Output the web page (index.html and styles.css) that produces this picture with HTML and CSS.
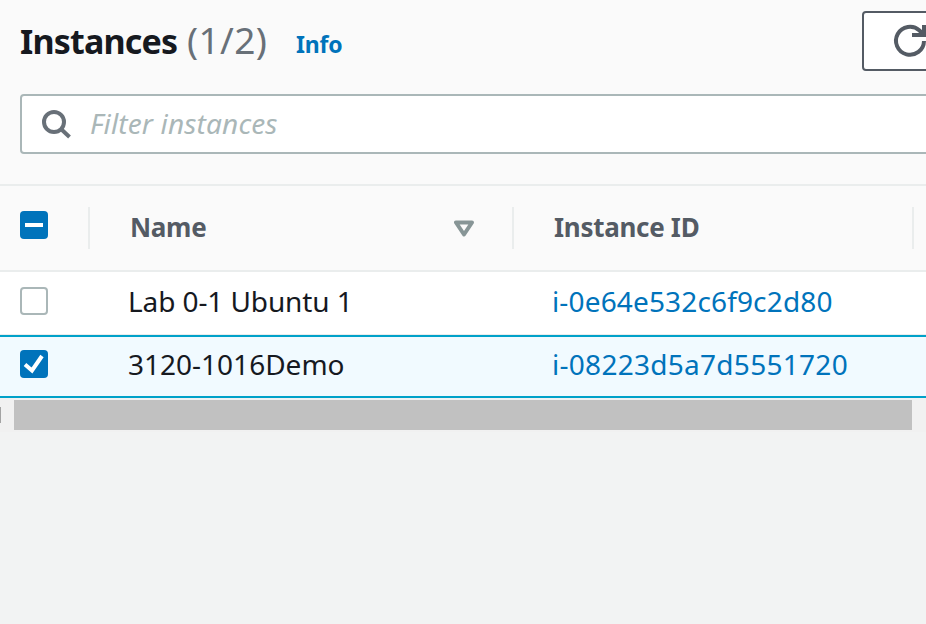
FILE: index.html
```html
<!DOCTYPE html>
<html lang="en">
<head>
<meta charset="utf-8">
<title>Instances</title>
<link rel="stylesheet" href="styles.css">
</head>
<body>
<main class="panel">
  <header class="head">
    <div class="title-row">
      <h1><span class="title">Instances</span><span class="count">(1/2)</span></h1>
      <a class="info">Info</a>
      <button class="refresh" aria-label="Refresh"><svg width="36" height="36" viewBox="0 0 36 36" fill="none" stroke="#545b64" stroke-width="4"><path d="M32 18A14 14 0 1 1 27.500 7.500L31 11"/><path d="M32 2V12H20"/></svg></button>
    </div>
    <div class="search">
      <svg width="32" height="32" viewBox="0 0 32 32" fill="none" stroke="#687078" stroke-width="4"><circle cx="14" cy="14" r="10"/><path d="M21 21L29.500 29"/></svg>
      <span class="placeholder">Filter instances</span>
    </div>
  </header>
  <div class="row columns">
    <div class="check"><span class="box on"><svg width="28" height="28" viewBox="0 0 28 28"><path d="M5 14H23" stroke="#fff" stroke-width="4"/></svg></span></div>
    <div class="name"><span class="label">Name</span><svg class="sort" width="20" height="17" viewBox="0 0 20 17"><path d="M2 2.500H18L10 14.500Z" fill="none" stroke="#879596" stroke-width="4" stroke-linejoin="round"/></svg></div>
    <div class="id"><span class="label">Instance ID</span></div>
  </div>
  <div class="row item first">
    <div class="check"><span class="box"></span></div>
    <div class="name"><span class="lab">Lab 0-1 Ubuntu 1</span></div>
    <div class="id"><a>i-0e64e532c6f9c2d80</a></div>
  </div>
  <div class="row item selected">
    <div class="check"><span class="box on"><svg width="28" height="28" viewBox="0 0 28 28"><path d="M5 14.500L12 20.500L22 6" fill="none" stroke="#fff" stroke-width="4"/></svg></span></div>
    <div class="name"><span>3120-1016Demo</span></div>
    <div class="id"><a class="wide">i-08223d5a7d5551720</a></div>
  </div>
  <div class="scroll"><span class="cap"></span><span class="thumb"></span></div>
</main>
</body>
</html>
```
FILE: styles.css
```css
*{box-sizing:border-box}
body{margin:0;background:#f2f3f3;font-family:"Noto Sans","Open Sans",sans-serif;color:#16191f;overflow:hidden}
.panel{width:926px;height:624px;overflow:hidden}
.head{height:186px;background:#fafafa;border-bottom:2px solid #eaeded;padding:11px 0 0 20px}
.title-row{display:flex;height:60px}
h1{display:flex;margin:0;font-size:34px;line-height:60px;white-space:nowrap;width:276px}
.title{width:167px;letter-spacing:-.8px}
.count{font-size:37px;line-height:58px;font-weight:400;color:#687078;letter-spacing:.4px}
.info{font-size:23px;font-weight:700;line-height:66px;color:#0073bb;letter-spacing:-.2px}
.refresh{margin-left:auto;flex:none;width:80px;height:60px;margin-right:-16px;border:2px solid #545b64;border-radius:4px;background:#fff;padding:0 0 0 28px;text-align:left}
.refresh svg{display:block}
.search{display:flex;align-items:center;margin-top:23px;width:930px;height:60px;border:2px solid #aab7b8;border-radius:4px;background:#fff;padding-left:18px}
.placeholder{font-size:28px;line-height:36px;font-style:italic;color:#aab7b8;margin:0 0 2px 18px;white-space:nowrap;letter-spacing:.15px}
.row{display:grid;grid-template-columns:90px 424px 400px;align-items:center}
.row>div{display:flex;align-items:center;height:42px}
.check{padding-left:20px}
.check .box{margin-bottom:6px}
.columns{height:86px;background:#fafafa;border-bottom:2px solid #eaeded;font-size:26px;font-weight:700;color:#545b64}
.columns>div{border-right:2px solid #eaeded}
.label{margin-bottom:2px;letter-spacing:-.3px}
.name,.id{padding-left:40px;white-space:nowrap}
.sort{margin-left:auto;margin-right:38px}
.item{height:64px;background:#fff;border-bottom:2px solid #eaeded;font-size:28px}
.item .name,.item .id{padding:0 0 6px 38px}
.first{padding-top:2px}
.item .lab{letter-spacing:-.1px}
.selected{height:63px;background:#f1faff;border:solid #00a1c9;border-width:2px 0;margin-top:-1px}
.box{display:block;width:28px;height:28px;border:2px solid #aab7b8;border-radius:4px;background:#fff}
.on{border:0;background:#0073bb}
.box svg{display:block}
.id a{color:#0073bb;letter-spacing:.15px}
.id .wide{letter-spacing:.28px}
.scroll{display:flex;height:34px;padding-top:2px;background:#f1f1f1}
.cap{width:1px;height:16px;margin:7px 13px 0 0;background:#a3a3a3}
.thumb{width:898px;height:30px;background:#c1c1c1}
```
